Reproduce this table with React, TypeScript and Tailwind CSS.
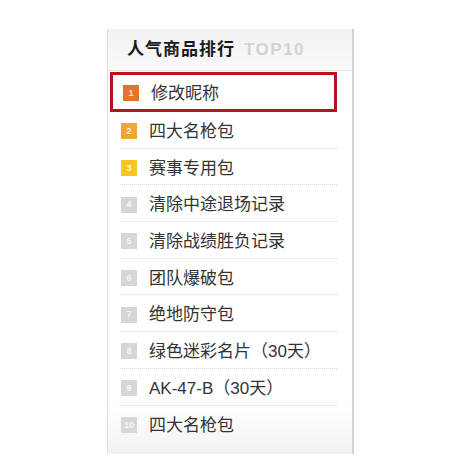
const items = [
  '修改昵称',
  '四大名枪包',
  '赛事专用包',
  '清除中途退场记录',
  '清除战绩胜负记录',
  '团队爆破包',
  '绝地防守包',
  '绿色迷彩名片（30天）',
  'AK-47-B（30天）',
  '四大名枪包',
]

function Badge({ n }: { n: number }) {
  // top three get warm colours, the rest are grey
  const color =
    n === 1 ? 'bg-[#e2742c]' : n === 2 ? 'bg-[#f0a535]' : n === 3 ? 'bg-[#f6c623]' : 'bg-[#d6d6d6]'
  return (
    <span
      className={`${color} flex h-[16px] w-[16px] shrink-0 items-center justify-center text-[9px] font-bold leading-none text-white/80`}
    >
      {n}
    </span>
  )
}

export default function App() {
  return (
    <div
      className="min-h-[472px] bg-white pl-[107px] pt-[29px]"
      style={{ fontFamily: '"Liberation Sans", "Noto Sans CJK SC", sans-serif' }}
    >
      <div className="flex h-[425px] w-[247px] flex-col border-l border-r-2 border-l-[#e0e0e0] border-r-[#d4d4d4] bg-gradient-to-b from-white from-[88%] to-[#f2f2f2]">
        {/* header */}
        <div className="flex h-[42px] items-center border-b border-[#e6e6e6] bg-gradient-to-b from-[#f1f1f1] to-[#fafafa] pl-[19px]">
          <span className="text-[17px] font-bold tracking-[1px] text-[#1a1a1a]">人气商品排行</span>
          <span className="ml-[9px] text-[17px] font-bold tracking-[1.5px] text-[#d2d2d2]">TOP10</span>
        </div>

        <ul className="ml-[2px] mr-[15px] mt-[1px]">
          {items.map((name, i) => (
            <li
              key={i}
              className={
                i === 0
                  ? 'flex h-[40px] items-center border-[3px] border-[#b5121b] pl-[10px] pt-[2px]'
                  : 'ml-[10px] flex h-[36.7px] items-center border-b border-dotted border-[#d8d8d8] pl-[1px] pt-[3px] last:border-b-0'
              }
            >
              <Badge n={i + 1} />
              <span className="ml-[12px] text-[17px] leading-none text-[#333]">{name}</span>
            </li>
          ))}
        </ul>
      </div>
    </div>
  )
}
